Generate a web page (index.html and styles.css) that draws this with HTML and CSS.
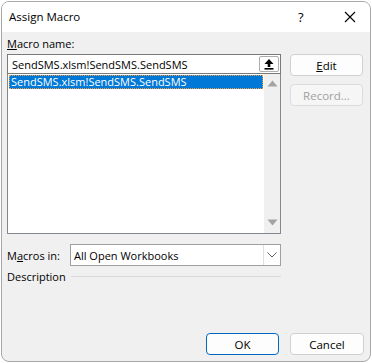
FILE: index.html
```html
<!DOCTYPE html>
<html lang="en">
<head>
   <meta charset="UTF-8">
   <title>Assign Macro</title>
   <link rel="stylesheet" href="styles.css">
</head>
<body>
   <div class="window">
      <div class="titlebar">
         <span class="title">Assign Macro</span>
         <span class="help">?</span>
         <span class="close">
            <svg width="12" height="12" viewBox="0 0 12 12"><path d="M1 1 L11 11 M11 1 L1 11" stroke="#000" stroke-width="1.1" fill="none"/></svg>
         </span>
      </div>

      <div class="content">
         <div class="top">
            <div class="left">
               <div class="label"><u>M</u>acro name:</div>
               <div class="name-input">
                  <span class="name-text">SendSMS.xlsm!SendSMS.SendSMS</span>
                  <span class="up-btn">
                     <svg width="10" height="12" viewBox="0 0 10 12"><path d="M5 1 L9.5 6 L6.3 6 L6.3 9 L3.7 9 L3.7 6 L0.5 6 Z" fill="#000"/><rect x="0.5" y="10" width="9" height="1.6" fill="#000"/></svg>
                  </span>
               </div>
               <div class="list">
                  <div class="items">
                     <div class="item selected">SendSMS.xlsm!SendSMS.SendSMS</div>
                  </div>
                  <div class="scrollbar">
                     <svg width="11" height="7" viewBox="0 0 11 7"><path d="M5.5 0.5 L10.5 6.5 L0.5 6.5 Z" fill="#a3a3a3"/></svg>
                     <svg width="11" height="7" viewBox="0 0 11 7"><path d="M0.5 0.5 L10.5 0.5 L5.5 6.5 Z" fill="#a3a3a3"/></svg>
                  </div>
               </div>
            </div>
            <div class="side">
               <button class="btn"><u>E</u>dit</button>
               <button class="btn" disabled>Record...</button>
            </div>
         </div>

         <div class="macros-in">
            <span class="label">M<u>a</u>cros in:</span>
            <div class="select">
               <span class="select-text">All Open Workbooks</span>
               <span class="chevron">
                  <svg width="10" height="6" viewBox="0 0 10 6"><path d="M0.5 0.5 L5 5 L9.5 0.5" stroke="#606060" stroke-width="1" fill="none"/></svg>
               </span>
            </div>
         </div>

         <div class="desc">
            <span class="label">Description</span>
            <span class="rule"></span>
         </div>

         <div class="footer">
            <button class="btn default">OK</button>
            <button class="btn">Cancel</button>
         </div>
      </div>
   </div>
</body>
</html>
```

FILE: styles.css
```css
body {
   margin: 0;
   background-color: #fff;
   font-family: "Open Sans", "Noto Sans", sans-serif;
   font-size: 11px;
   color: #000;
}

.window {
   box-sizing: border-box;
   width: 370px;
   height: 361px;
   margin: 1px 0 0 1px;
   border: 1px solid #a8a8a8;
   border-radius: 8px;
   background-color: #f0f0f0;
   overflow: hidden;
   display: flex;
   flex-direction: column;
}

.titlebar {
   height: 30px;
   background-color: #fff;
   display: flex;
   align-items: center;
   flex-shrink: 0;
   font-size: 11.5px;
}

.title {
   margin-left: 7px;
   margin-top: -1px;
   flex: 1;
}

.help {
   width: 14px;
   margin-right: 32px;
   font-size: 13px;
}

.close {
   width: 12px;
   height: 12px;
   margin-right: 14px;
}

.content {
   flex: 1;
   display: flex;
   flex-direction: column;
   padding: 4px 6px 6px 5px;
}

.label {
   line-height: 15px;
   white-space: nowrap;
}

.top {
   display: flex;
   gap: 9px;
}

.left {
   width: 274px;
}

.left .label {
   margin-bottom: 3px;
}

.name-input {
   box-sizing: border-box;
   height: 20px;
   background-color: #fff;
   border: 1px solid #7a7a7a;
   display: flex;
   align-items: center;
   padding-left: 4px;
}

.name-text {
   flex: 1;
}

.up-btn {
   box-sizing: border-box;
   width: 20px;
   height: 16px;
   margin-right: 1px;
   border: 1px solid #adadad;
   border-radius: 2px;
   display: flex;
   align-items: center;
   justify-content: center;
}

.list {
   box-sizing: border-box;
   height: 160px;
   border: 1px solid #828790;
   border-top: none;
   background-color: #fff;
   display: flex;
}

.items {
   flex: 1;
   padding: 1px 1px 0 1px;
}

.item {
   height: 14px;
   line-height: 14px;
   padding-left: 2px;
}

.item.selected {
   box-sizing: border-box;
   background-color: #0078d7;
   color: #fff;
   outline: 1px dotted #f0a040;
   outline-offset: -1px;
}

.scrollbar {
   width: 16px;
   background-color: #f0f0f0;
   display: flex;
   flex-direction: column;
   justify-content: space-between;
   align-items: center;
   padding: 6px 0 7px;
}

.side {
   display: flex;
   flex-direction: column;
   gap: 8px;
   padding-top: 18px;
}

.btn {
   box-sizing: border-box;
   width: 73px;
   height: 22px;
   background-color: #fdfdfd;
   border: 1px solid #d0d0d0;
   border-radius: 4px;
   font-family: inherit;
   font-size: 11.5px;
   color: #000;
   padding: 0;
}

.btn:disabled {
   color: #a0a0a0;
   background-color: #f6f6f6;
   border-color: #dcdcdc;
}

.btn.default {
   border-color: #0067c0;
}

.macros-in {
   display: flex;
   align-items: center;
   margin-top: 10px;
}

.macros-in .label {
   width: 63px;
}

.select {
   box-sizing: border-box;
   width: 211px;
   height: 22px;
   background-color: #fff;
   border: 1px solid #a0a0a0;
   display: flex;
   align-items: center;
}

.select-text {
   flex: 1;
   padding-left: 3px;
}

.chevron {
   width: 16px;
   height: 20px;
   border-left: 1px solid #e0e0e0;
   display: flex;
   align-items: center;
   justify-content: center;
}

.desc {
   display: flex;
   align-items: center;
   margin-top: 3px;
   width: 274px;
}

.rule {
   flex: 1;
   height: 1px;
   background-color: #d8d8d8;
   margin-left: 5px;
}

.footer {
   margin-top: auto;
   display: flex;
   justify-content: flex-end;
   gap: 11px;
   padding-bottom: 0;
}

.footer .btn:last-child {
   width: 74px;
}
```
